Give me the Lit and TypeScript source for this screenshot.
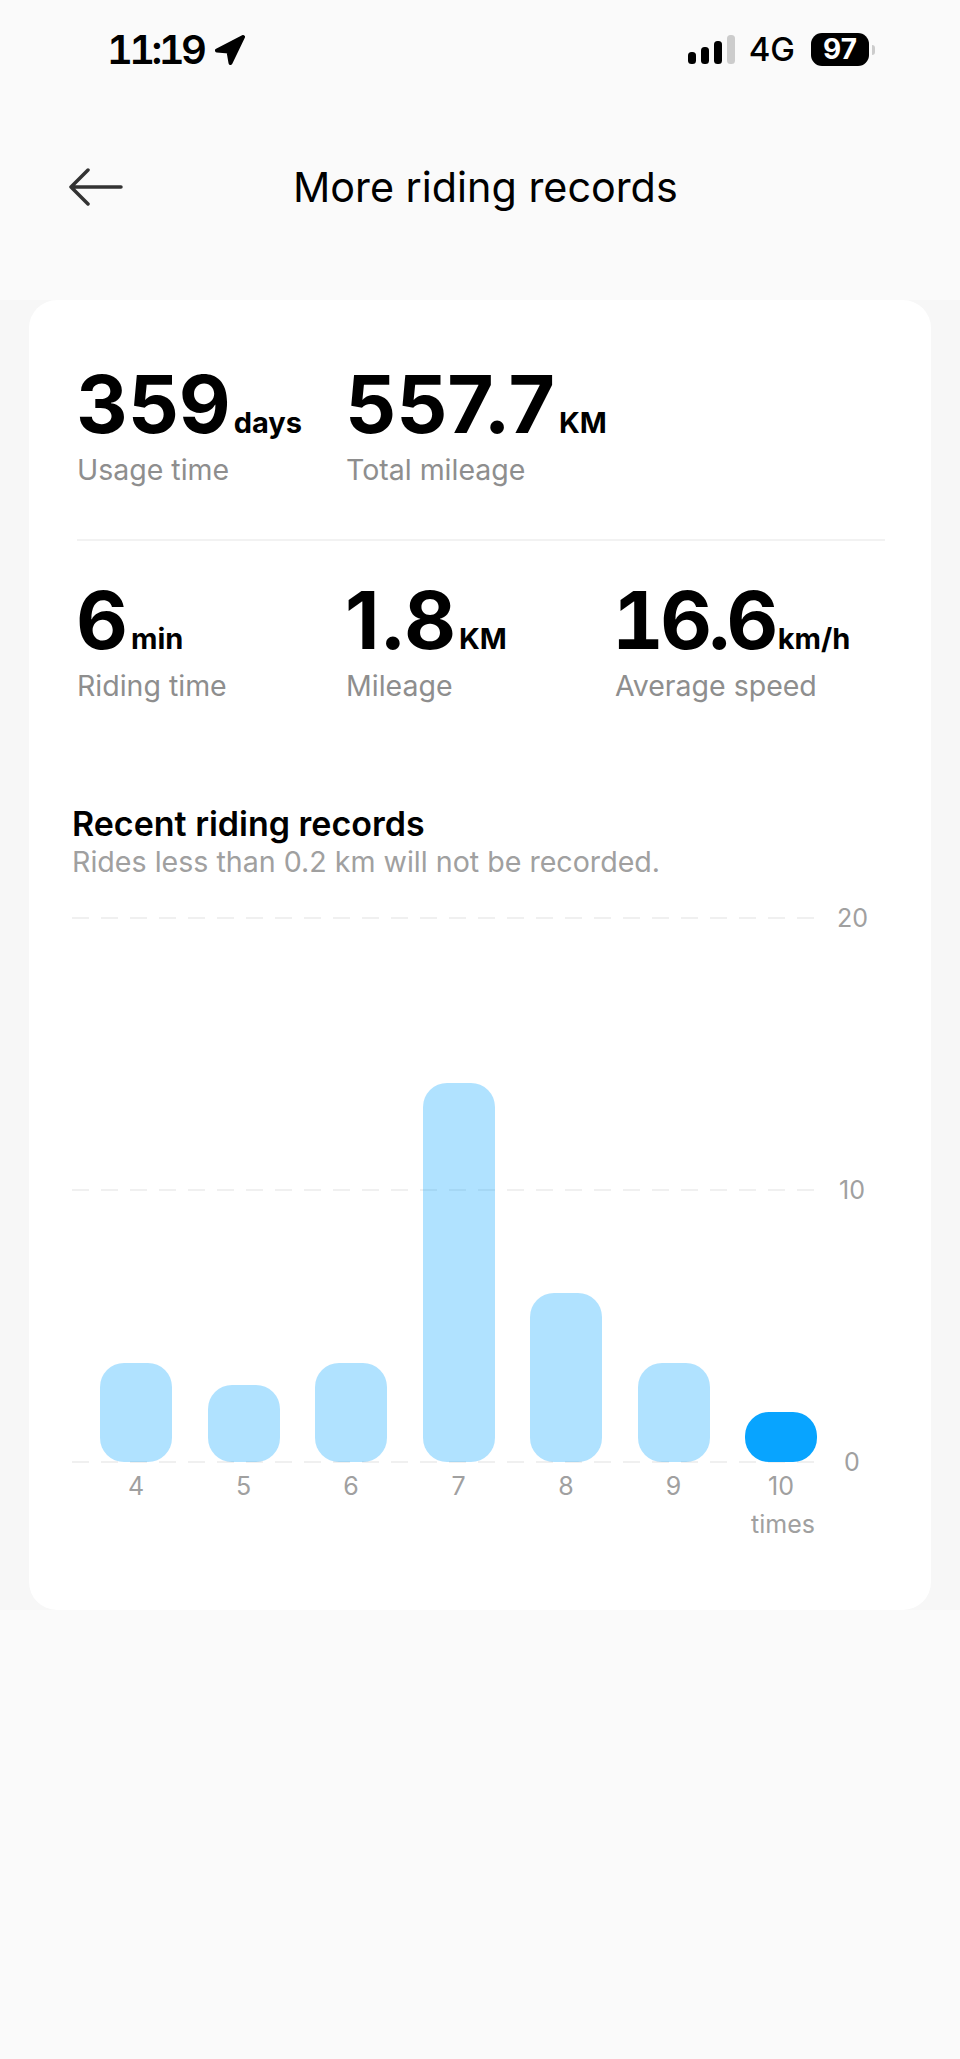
import { LitElement, html, css } from 'lit';
import { customElement } from 'lit/decorators.js';

const topStats = [
  { value: '359', unit: 'days', label: 'Usage time', gap: 3 },
  { value: '557.7', unit: 'KM', label: 'Total mileage', gap: 4 },
];
const bottomStats = [
  { value: '6', unit: 'min', label: 'Riding time', gap: 3 },
  { value: '1.8', unit: 'KM', label: 'Mileage', gap: 3 },
  { value: '16.6', unit: 'km/h', label: 'Average speed', gap: 3, wide: true },
];
const bars = [
  { label: '4', height: 99 },
  { label: '5', height: 77 },
  { label: '6', height: 99 },
  { label: '7', height: 379 },
  { label: '8', height: 169 },
  { label: '9', height: 99 },
  { label: '10', height: 50, current: true },
];

type Stat = { value: string; unit: string; label: string; gap: number; wide?: boolean };

@customElement('app-root')
export class AppRoot extends LitElement {
  static styles = css`
    :host {
      display: block;
      width: 960px;
      height: 2059px;
      background: #fafafa;
      font-family: Inter, 'Liberation Sans', sans-serif;
      color: #000;
      overflow: hidden;
    }

    .status {
      height: 100px;
      box-sizing: border-box;
      padding: 34px 85px 0 107px;
      display: flex;
      justify-content: space-between;
      align-items: flex-start;
    }

    .time {
      display: flex;
      align-items: center;
      gap: 12px;
      font-size: 40px;
      font-weight: 600;
      font-variant-numeric: tabular-nums;
      line-height: 31px;
      letter-spacing: -3.6px;
    }

    .status-right {
      display: flex;
      align-items: center;
      margin-top: -1px;
    }

    .net {
      font-size: 33px;
      font-weight: 500;
      line-height: 33px;
      margin: 0 16px 0 14px;
    }

    .battery {
      width: 58px;
      height: 33px;
      border-radius: 11px;
      background: #000;
      color: #fff;
      font-size: 28px;
      font-weight: 700;
      line-height: 33px;
      text-align: center;
    }

    .nub {
      width: 3px;
      height: 10px;
      margin-left: 3px;
      border-radius: 0 3px 3px 0;
      background: #ccc;
    }

    .nav {
      height: 200px;
      box-sizing: border-box;
      padding: 68px 0 0 68px;
      display: flex;
      align-items: flex-start;
    }

    .title {
      margin-left: 169px;
      font-size: 41.3px;
      font-weight: 400;
      line-height: 38px;
    }

    .band {
      background: #f7f7f7;
      padding: 0 29px;
    }

    .card {
      height: 1310px;
      box-sizing: border-box;
      padding: 68px 0 0 43px;
      background: #fff;
      border-radius: 28px;
    }

    .row {
      display: flex;
      margin-left: 5px;
    }

    .row.first {
      width: 808px;
      height: 173px;
      box-sizing: border-box;
      border-bottom: 2px solid #f2f2f2;
    }

    .row.second {
      margin-top: 43px;
    }

    .stat {
      width: 269px;
    }

    .num {
      display: flex;
      align-items: baseline;
      height: 72px;
      line-height: 72px;
    }

    .value {
      margin-left: -1px;
      font-size: 80px;
      font-weight: 700;
      letter-spacing: 0;
    }

    .value.wide {
      margin-left: -3px;
      font-variant-numeric: tabular-nums;
      letter-spacing: -3.5px;
    }

    .unit {
      font-size: 29px;
      font-weight: 700;
    }

    .label {
      margin-top: 12px;
      font-size: 28.5px;
      line-height: 36px;
      color: #8e8e8e;
    }

    .heading {
      margin-top: 100px;
      font-size: 34px;
      font-weight: 600;
      line-height: 40px;
    }

    .note {
      font-size: 28.6px;
      line-height: 36px;
      color: #a0a0a0;
    }

    .chart {
      margin-top: 37px;
      display: grid;
      grid-template-columns: 745px 1fr;
      grid-template-rows: 546px;
    }

    .grid-lines {
      grid-area: 1 / 1;
      display: flex;
      flex-direction: column;
      justify-content: space-between;
    }

    .grid-lines i {
      display: block;
      height: 2px;
      background: repeating-linear-gradient(90deg, #f0f0f0 0 17px, transparent 17px 29px);
    }

    .bars {
      grid-area: 1 / 1;
      display: flex;
      gap: 35.5px;
      padding-left: 28px;
      align-items: flex-end;
    }

    .bar {
      width: 72px;
      margin-bottom: 1px;
      border-radius: 24px;
      background: rgba(0, 160, 255, 0.31);
    }

    .bar.current {
      background: #08a4ff;
    }

    .y-axis {
      grid-area: 1 / 2;
      display: flex;
      flex-direction: column;
      justify-content: space-between;
      width: 30px;
      margin: -15px 0 -15px 20px;
      text-align: center;
      font-size: 25px;
      line-height: 32px;
      color: #a0a0a0;
    }

    .x-axis {
      display: flex;
      gap: 35.5px;
      padding-left: 28px;
      margin-top: 7px;
      font-size: 25px;
      line-height: 32px;
      color: #a0a0a0;
    }

    .x-axis span {
      width: 72px;
      text-align: center;
    }

    .unit-note {
      width: 745px;
      text-align: right;
      margin-top: 6px;
      box-sizing: border-box;
      padding-right: 2px;
      font-size: 25px;
      line-height: 32px;
      color: #a0a0a0;
    }
  `;

  renderStat(s: Stat) {
    return html`
      <div class="stat">
        <div class="num">
          <span class="value ${s.wide ? 'wide' : ''}">${s.value}</span>
          <span class="unit" style="margin-left:${s.gap}px">${s.unit}</span>
        </div>
        <div class="label">${s.label}</div>
      </div>
    `;
  }

  render() {
    return html`
      <div class="status">
        <div class="time">
          11:19
          <svg width="30" height="30" viewBox="0 0 30 30">
            <path
              d="M28 2 L2 15.5 L13.5 16.5 L15.5 28 Z"
              fill="#000"
              stroke="#000"
              stroke-width="4"
              stroke-linejoin="round"
            />
          </svg>
        </div>
        <div class="status-right">
          <svg width="47" height="30" viewBox="0 0 47 30">
            <rect x="0" y="17" width="8" height="12" rx="3.5" fill="#000" />
            <rect x="13" y="12" width="8" height="17" rx="3.5" fill="#000" />
            <rect x="26" y="6" width="8" height="23" rx="3.5" fill="#000" />
            <rect x="39" y="0" width="8" height="29" rx="3.5" fill="#ccc" />
          </svg>
          <span class="net">4G</span>
          <div class="battery">97</div>
          <div class="nub"></div>
        </div>
      </div>

      <div class="nav">
        <svg width="56" height="38" viewBox="0 0 56 38" fill="none" stroke="#333" stroke-width="3.5" stroke-linecap="round" stroke-linejoin="round">
          <path d="M53 19 H3 M20 2 L3 19 L20 36" />
        </svg>
        <div class="title">More riding records</div>
      </div>

      <div class="band">
        <div class="card">
          <div class="row first">${topStats.map((s) => this.renderStat(s))}</div>
          <div class="row second">${bottomStats.map((s) => this.renderStat(s))}</div>

          <div class="heading">Recent riding records</div>
          <div class="note">Rides less than 0.2 km will not be recorded.</div>

          <div class="chart">
            <div class="grid-lines"><i></i><i></i><i></i></div>
            <div class="bars">
              ${bars.map(
                (b) => html`<div class="bar ${b.current ? 'current' : ''}" style="height:${b.height}px"></div>`
              )}
            </div>
            <div class="y-axis"><span>20</span><span>10</span><span>0</span></div>
          </div>
          <div class="x-axis">${bars.map((b) => html`<span>${b.label}</span>`)}</div>
          <div class="unit-note">times</div>
        </div>
      </div>
    `;
  }
}
